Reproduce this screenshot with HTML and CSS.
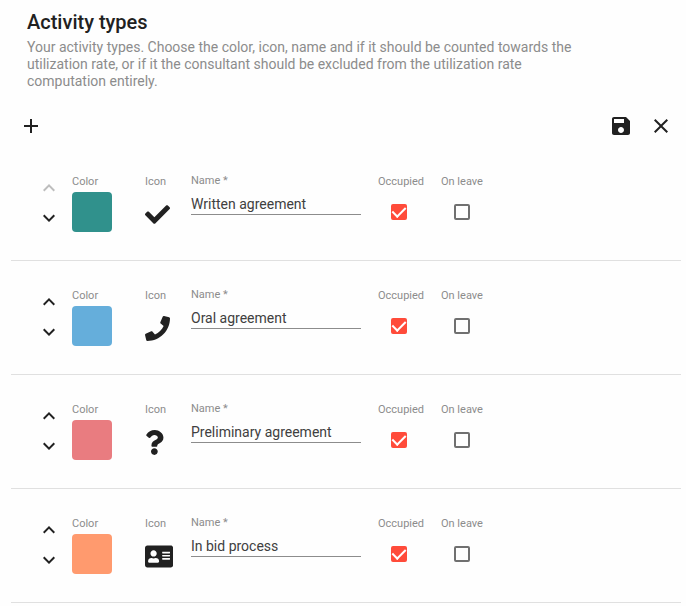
FILE: index.html
```html
<!DOCTYPE html>
<html lang="en">
<head>
    <meta charset="UTF-8">
    <meta name="viewport" content="width=device-width, initial-scale=1.0">
    <title>Activity types</title>
    <link rel="stylesheet" href="styles.css">
</head>
<body>
    <header class="page-header">
        <h1>Activity types</h1>
        <p>Your activity types. Choose the color, icon, name and if it should be counted towards the utilization rate, or if it the consultant should be excluded from the utilization rate computation entirely.</p>
    </header>

    <!-- shared icons -->
    <svg class="icon-defs" aria-hidden="true">
        <symbol id="up" viewBox="0 0 24 24"><path d="M12 8l-6 6 1.41 1.41L12 10.83l4.59 4.58L18 14z"/></symbol>
        <symbol id="down" viewBox="0 0 24 24"><path d="M16.59 8.59L12 13.17 7.41 8.59 6 10l6 6 6-6z"/></symbol>
    </svg>

    <form class="activity-form">
        <div class="toolbar">
            <button type="button" class="icon-button" aria-label="Add">
                <svg viewBox="0 0 24 24"><path d="M19 13h-6v6h-2v-6H5v-2h6V5h2v6h6v2z"/></svg>
            </button>
            <div class="spacer"></div>
            <button type="submit" class="icon-button" aria-label="Save">
                <svg viewBox="0 0 24 24"><path d="M17 3H5c-1.11 0-2 .9-2 2v14c0 1.1.89 2 2 2h14c1.1 0 2-.9 2-2V7l-4-4zm-5 16c-1.66 0-3-1.34-3-3s1.34-3 3-3 3 1.34 3 3-1.34 3-3 3zm3-10H5V5h10v4z"/></svg>
            </button>
            <button type="button" class="icon-button" aria-label="Close">
                <svg viewBox="0 0 24 24"><path d="M19 6.41L17.59 5 12 10.59 6.41 5 5 6.41 10.59 12 5 17.59 6.41 19 12 13.41 17.59 19 19 17.59 13.41 12z"/></svg>
            </button>
        </div>

        <div class="activity-row">
            <div class="order">
                <button type="button" aria-label="Move up" disabled><svg><use href="#up"/></svg></button>
                <button type="button" aria-label="Move down"><svg><use href="#down"/></svg></button>
            </div>
            <div class="field">
                <label for="color-1">Color</label>
                <button type="button" id="color-1" class="swatch teal"></button>
            </div>
            <div class="field">
                <label for="icon-1">Icon</label>
                <button type="button" id="icon-1" class="type-icon">
                    <svg viewBox="0 0 512 512"><path d="M173.898 439.404l-166.4-166.4c-9.997-9.997-9.997-26.206 0-36.204l36.203-36.204c9.997-9.998 26.207-9.998 36.204 0L192 312.69 432.095 72.596c9.997-9.997 26.207-9.997 36.204 0l36.203 36.204c9.997 9.997 9.997 26.206 0 36.204l-294.4 294.401c-9.998 9.997-26.207 9.997-36.204-.001z"/></svg>
                </button>
            </div>
            <div class="field name">
                <label for="name-1">Name *</label>
                <input type="text" id="name-1" value="Written agreement" required>
            </div>
            <div class="field check">
                <label for="occupied-1">Occupied</label>
                <input type="checkbox" id="occupied-1" checked>
            </div>
            <div class="field check">
                <label for="leave-1">On leave</label>
                <input type="checkbox" id="leave-1">
            </div>
        </div>

        <div class="activity-row">
            <div class="order">
                <button type="button" aria-label="Move up"><svg><use href="#up"/></svg></button>
                <button type="button" aria-label="Move down"><svg><use href="#down"/></svg></button>
            </div>
            <div class="field">
                <label for="color-2">Color</label>
                <button type="button" id="color-2" class="swatch blue"></button>
            </div>
            <div class="field">
                <label for="icon-2">Icon</label>
                <button type="button" id="icon-2" class="type-icon">
                    <svg viewBox="0 0 512 512"><path d="M493.4 24.6l-104-24c-11.3-2.6-22.9 3.3-27.5 13.9l-48 112c-4.2 9.8-1.4 21.3 6.9 28l60.6 49.6c-36 76.7-98.9 140.5-177.2 177.2l-49.6-60.6c-6.8-8.3-18.2-11.1-28-6.9l-112 48C3.9 366.5-2 378.1.6 389.4l24 104C27.1 504.2 36.7 512 48 512c256.1 0 464-207.5 464-464 0-11.2-7.7-20.9-18.6-23.4z"/></svg>
                </button>
            </div>
            <div class="field name">
                <label for="name-2">Name *</label>
                <input type="text" id="name-2" value="Oral agreement" required>
            </div>
            <div class="field check">
                <label for="occupied-2">Occupied</label>
                <input type="checkbox" id="occupied-2" checked>
            </div>
            <div class="field check">
                <label for="leave-2">On leave</label>
                <input type="checkbox" id="leave-2">
            </div>
        </div>

        <div class="activity-row">
            <div class="order">
                <button type="button" aria-label="Move up"><svg><use href="#up"/></svg></button>
                <button type="button" aria-label="Move down"><svg><use href="#down"/></svg></button>
            </div>
            <div class="field">
                <label for="color-3">Color</label>
                <button type="button" id="color-3" class="swatch red"></button>
            </div>
            <div class="field">
                <label for="icon-3">Icon</label>
                <button type="button" id="icon-3" class="type-icon">
                    <svg viewBox="0 0 384 512"><path d="M202.021 0C122.202 0 70.503 32.703 29.914 91.026c-7.363 10.58-5.093 25.086 5.178 32.874l43.138 32.709c10.373 7.865 25.132 6.026 33.253-4.148 25.049-31.381 43.63-49.449 82.757-49.449 30.764 0 68.816 19.799 68.816 49.631 0 22.552-18.617 34.134-48.993 51.164-35.423 19.86-82.299 44.576-82.299 106.405V320c0 13.255 10.745 24 24 24h72.471c13.255 0 24-10.745 24-24v-5.773c0-42.86 125.268-44.645 125.268-160.627C377.504 66.256 286.902 0 202.021 0zM192 373.459c-38.196 0-69.271 31.075-69.271 69.271 0 38.195 31.075 69.27 69.271 69.27s69.271-31.075 69.271-69.271-31.075-69.27-69.271-69.27z"/></svg>
                </button>
            </div>
            <div class="field name">
                <label for="name-3">Name *</label>
                <input type="text" id="name-3" value="Preliminary agreement" required>
            </div>
            <div class="field check">
                <label for="occupied-3">Occupied</label>
                <input type="checkbox" id="occupied-3" checked>
            </div>
            <div class="field check">
                <label for="leave-3">On leave</label>
                <input type="checkbox" id="leave-3">
            </div>
        </div>

        <div class="activity-row">
            <div class="order">
                <button type="button" aria-label="Move up"><svg><use href="#up"/></svg></button>
                <button type="button" aria-label="Move down"><svg><use href="#down"/></svg></button>
            </div>
            <div class="field">
                <label for="color-4">Color</label>
                <button type="button" id="color-4" class="swatch orange"></button>
            </div>
            <div class="field">
                <label for="icon-4">Icon</label>
                <button type="button" id="icon-4" class="type-icon">
                    <svg viewBox="0 0 576 512"><path d="M528 32H48C21.500 32 0 53.500 0 80v352c0 26.500 21.500 48 48 48h480c26.500 0 48-21.500 48-48V80c0-26.500-21.500-48-48-48zm-352 96c35.300 0 64 28.700 64 64s-28.700 64-64 64-64-28.700-64-64 28.700-64 64-64zm112 236.800c0 10.600-10 19.200-22.400 19.200H86.400C74 384 64 375.400 64 364.800v-19.200c0-31.800 30.100-57.600 67.200-57.600h5c12.300 5.100 25.700 8 39.800 8s27.600-2.900 39.800-8h5c37.100 0 67.200 25.800 67.200 57.600v19.200zM512 312c0 4.400-3.600 8-8 8H360c-4.400 0-8-3.600-8-8v-16c0-4.400 3.600-8 8-8h144c4.400 0 8 3.600 8 8v16zm0-64c0 4.400-3.600 8-8 8H360c-4.400 0-8-3.600-8-8v-16c0-4.400 3.600-8 8-8h144c4.400 0 8 3.600 8 8v16zm0-64c0 4.400-3.600 8-8 8H360c-4.400 0-8-3.600-8-8v-16c0-4.400 3.600-8 8-8h144c4.400 0 8 3.600 8 8v16z"/></svg>
                </button>
            </div>
            <div class="field name">
                <label for="name-4">Name *</label>
                <input type="text" id="name-4" value="In bid process" required>
            </div>
            <div class="field check">
                <label for="occupied-4">Occupied</label>
                <input type="checkbox" id="occupied-4" checked>
            </div>
            <div class="field check">
                <label for="leave-4">On leave</label>
                <input type="checkbox" id="leave-4">
            </div>
        </div>
    </form>
</body>
</html>
```
FILE: styles.css
```css
* {
    box-sizing: border-box;
}

body {
    margin: 0;
    padding: 8px 5px 0 11px;
    background: #fefefe;
    color: #212121;
    font-family: Roboto, "Liberation Sans", sans-serif;
    font-size: 14px;
}

button {
    padding: 0;
    border: none;
    background: transparent;
    color: inherit;
    cursor: pointer;
}

svg {
    display: block;
    width: 24px;
    height: 24px;
    fill: currentColor;
}

.icon-defs {
    display: none;
}

.page-header {
    padding: 0 16px;
}

.page-header h1 {
    margin: 0 0 3px;
    font-size: 20px;
    font-weight: 500;
    line-height: 28px;
}

.page-header p {
    max-width: 560px;
    margin: 0;
    color: #8c8c8c;
    line-height: 17px;
}

.toolbar {
    display: flex;
    margin: 16px 0 1px;
}

.spacer {
    flex: 1;
}

.icon-button {
    display: flex;
    width: 40px;
    height: 40px;
    align-items: center;
    justify-content: center;
}

.activity-row {
    display: grid;
    grid-template-columns: 39px 73px 46px 187px 63px 1fr;
    height: 114px;
    padding: 26px 0 0 22px;
    border-bottom: 1px solid #e0e0e0;
}

.order button {
    display: flex;
    width: 31px;
    height: 30px;
    align-items: center;
    justify-content: center;
}

.order button:disabled {
    color: #bdbdbd;
    cursor: default;
}

.field {
    display: flex;
    flex-direction: column;
    align-items: flex-start;
}

.field label {
    color: #8c8c8c;
    font-size: 11px;
    line-height: 17px;
}

.swatch {
    width: 40px;
    height: 40px;
    margin-top: 2px;
    border-radius: 4px;
}

.teal {
    background: #30918c;
}

.blue {
    background: #65aedb;
}

.red {
    background: #e97c80;
}

.orange {
    background: #ff9a6e;
}

.type-icon {
    margin-top: 12px;
}

.type-icon svg {
    width: auto;
    height: 25px;
}

.name label {
    line-height: 15px;
}

.name input {
    width: 170px;
    height: 27px;
    padding: 6px 0 1px;
    border: none;
    border-bottom: 1px solid #8c8c8c;
    background: transparent;
    color: #404040;
    font: inherit;
    outline: none;
}

.check input {
    display: grid;
    width: 16px;
    height: 16px;
    margin: 14px 0 0 13px;
    border: 2px solid #707070;
    border-radius: 2px;
    appearance: none;
    place-items: center;
}

.check input:checked {
    border-color: #ff4b3a;
    background: #ff4b3a;
}

.check input:checked::after {
    width: 6px;
    height: 11px;
    margin-top: -3px;
    border: solid #fff;
    border-width: 0 2px 2px 0;
    content: '';
    transform: rotate(45deg);
}
```
